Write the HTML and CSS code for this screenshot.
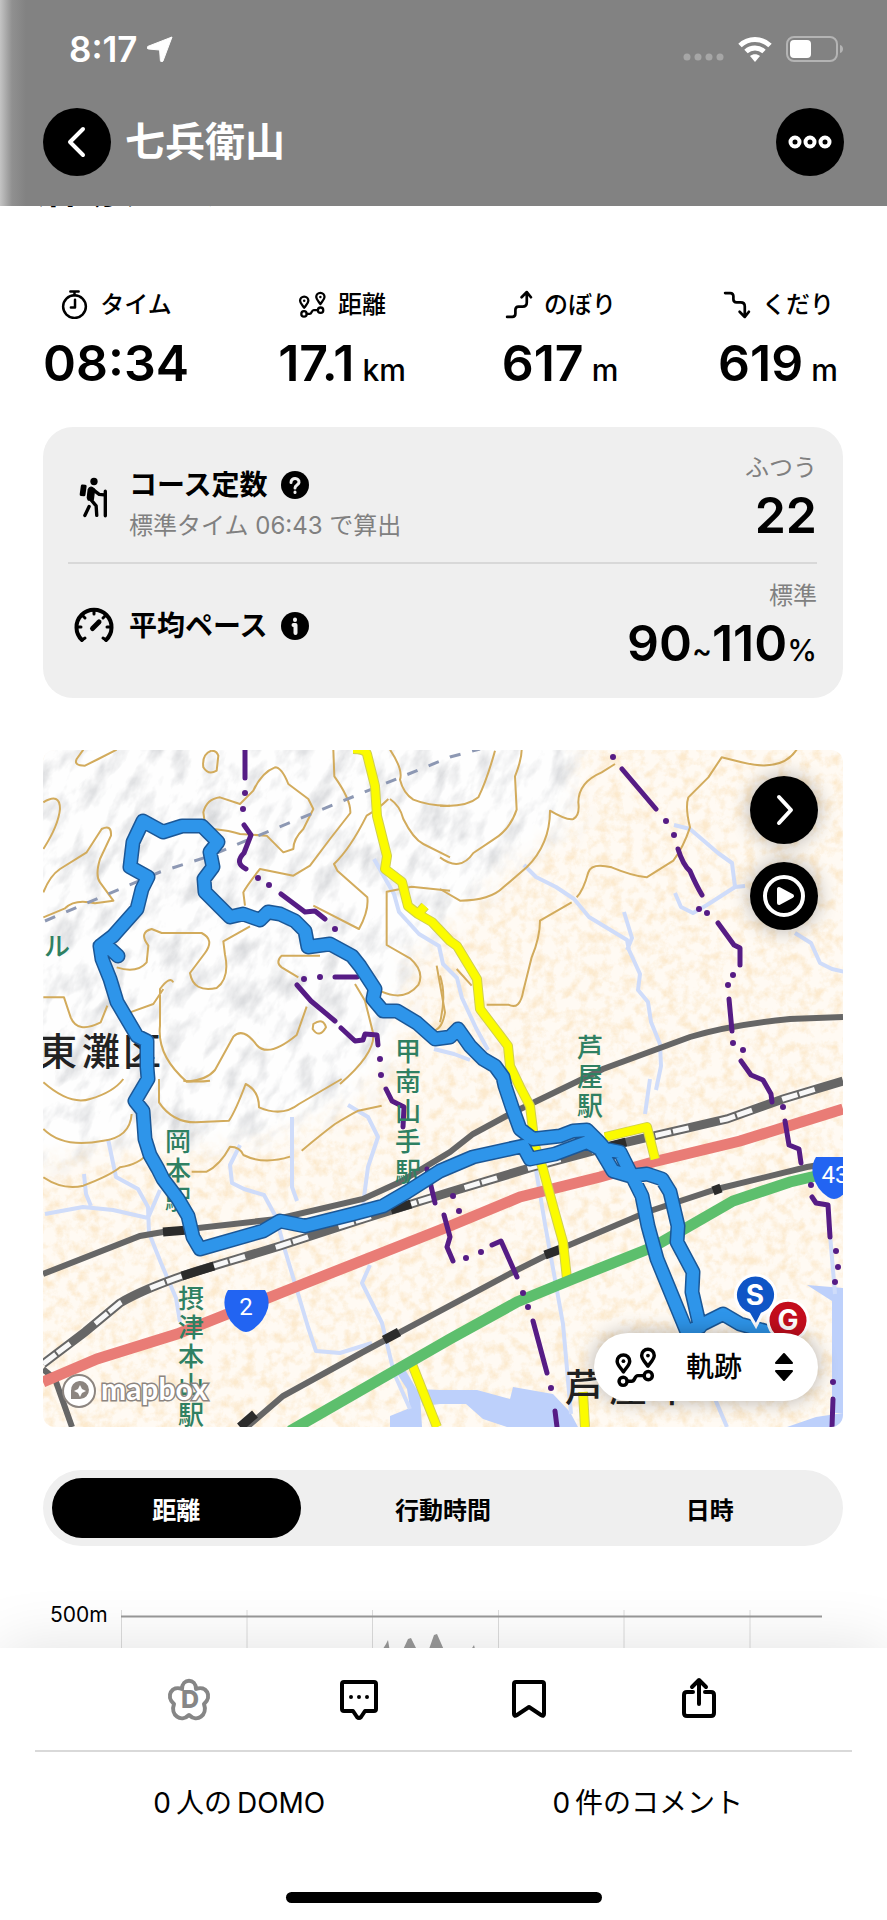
FILE: index.html
```
<!DOCTYPE html>
<html lang="ja">

<head>
  <meta charset="UTF-8">
  <meta name="viewport" content="width=device-width, initial-scale=1.0">
  <title>七兵衛山</title>
  <link rel="stylesheet" href="styles.css">
</head>

<body>
  <!-- shared icons -->
  <svg class="sprite" aria-hidden="true">
    <symbol id="icon-route" viewBox="520 795 140 135">
      <g fill="none" stroke="currentColor" stroke-width="11" stroke-linecap="round" stroke-linejoin="round">
        <path d="M550 878C540 864 530 855 530 844a20 20 0 0 1 40 0C570 855 560 864 550 878Z" />
        <path d="M628 860C618 846 608 837 608 826a20 20 0 0 1 40 0C648 837 638 846 628 860Z" />
        <circle cx="549" cy="908" r="13" />
        <circle cx="629" cy="890" r="13" />
        <path d="M562 908h14c12 0 8-18 20-18h20" />
      </g>
      <circle cx="550" cy="844" r="6" fill="currentColor" />
      <circle cx="628" cy="826" r="6" fill="currentColor" />
    </symbol>
  </svg>

  <div class="app">
    <header class="header">
      <div class="status">
        <span class="clock">8:17</span>
        <svg class="arrow" viewBox="0 0 26 26"><path d="M25 1 16 25c-.6 1.4-2.4 1.2-2.6-.4L12.600 14 1.500 13c-1.700-.2-1.900-2-.4-2.700Z" fill="#fff" stroke="#fff" stroke-linejoin="round" /></svg>
        <svg class="signal" viewBox="0 0 41 8" fill="#a6a6a6"><circle cx="4" cy="4" r="3.500" /><circle cx="15" cy="4" r="3.500" /><circle cx="26" cy="4" r="3.500" /><circle cx="37" cy="4" r="3.500" /></svg>
        <svg class="wifi" viewBox="0 0 34 26">
          <path d="M2 9.500C10.500 1.500 23.500 1.500 32 9.500M8 15.500c5-4.600 13-4.600 18 0" fill="none" stroke="#fff" stroke-width="5" />
          <path d="M17 26l-5-6c3-2.400 7-2.400 10 0Z" fill="#fff" />
        </svg>
        <svg class="battery" viewBox="0 0 58 26">
          <rect x="1" y="1" width="50" height="24" rx="7" fill="none" stroke="#b4b4b4" stroke-width="2" />
          <rect x="4" y="4" width="21" height="18" rx="4" fill="#fff" />
          <path d="M54 9c4 1 4 7 0 8Z" fill="#b4b4b4" />
        </svg>
      </div>
      <div class="titlebar">
        <button class="round" aria-label="戻る">
          <svg viewBox="0 0 68 68"><path d="M40 21 27 34l13 13" /></svg>
        </button>
        <h1>七兵衛山</h1>
        <button class="round" aria-label="メニュー">
          <svg viewBox="0 0 68 68"><circle cx="19" cy="34" r="4.500" /><circle cx="34" cy="34" r="4.500" /><circle cx="49" cy="34" r="4.500" /></svg>
        </button>
      </div>
    </header>

    <main class="content">
      <h2 class="section-title">活動データ</h2>

      <dl class="stats">
        <div class="stat">
          <dt>
            <svg viewBox="0 0 28 28" fill="none" stroke="#000" stroke-width="2.400" stroke-linecap="round" stroke-linejoin="round"><circle cx="14" cy="16" r="11" /><path d="M14 5V1.500M10 1.500h8M14.500 9.500V17H10.500" /></svg>
            タイム
          </dt>
          <dd>08:34</dd>
        </div>
        <div class="stat">
          <dt><svg viewBox="0 0 28 28"><use href="#icon-route" /></svg>距離</dt>
          <dd>17.1<small>km</small></dd>
        </div>
        <div class="stat">
          <dt>
            <svg viewBox="0 0 28 28" fill="none" stroke="#000" stroke-width="2.600" stroke-linecap="round" stroke-linejoin="round"><path d="M3 26h5q3 0 3-3v-4q0-3 3-3h4q4 0 4-4V3M17 7l5-5 4 5" /></svg>
            のぼり
          </dt>
          <dd>617<small>m</small></dd>
        </div>
        <div class="stat">
          <dt>
            <svg viewBox="0 0 28 28" fill="none" stroke="#000" stroke-width="2.600" stroke-linecap="round" stroke-linejoin="round"><path d="M3 3h5q3 0 3 3v3q0 3 3 3h4q4 0 4 4v9M17 21l5 5 4-5" /></svg>
            くだり
          </dt>
          <dd>619<small>m</small></dd>
        </div>
      </dl>

      <section class="card">
        <div class="row">
          <svg class="row-icon" viewBox="55 48 104 144">
            <circle cx="107" cy="66" r="12" />
            <rect x="62" y="76" width="19" height="38" rx="5" transform="rotate(8 71 95)" />
            <path d="M88 92q6-12 16-5l5 4-4 34-17 2-3-8Z" stroke="#000" stroke-width="4" stroke-linejoin="round" />
            <path d="M106 94 124 108 140 110M144 98V178M94 122 114 146 116 177M91 148 77 177" fill="none" stroke="#000" stroke-width="11" stroke-linecap="round" stroke-linejoin="round" />
          </svg>
          <div class="row-text">
            <h3>コース定数
              <button class="hint" aria-label="コース定数とは"><svg viewBox="0 0 28 28"><circle cx="14" cy="14" r="14" /><path d="M10 11.500c0-5.500 8.500-5 8 0-.3 2.600-4 2.500-4 5.500M14 21v.4" fill="none" stroke="#efefef" stroke-width="3" stroke-linecap="round" /></svg></button>
            </h3>
            <p>標準タイム 06:43 で算出</p>
          </div>
          <div class="row-value">
            <span>ふつう</span>
            <strong>22</strong>
          </div>
        </div>
        <div class="row">
          <svg class="row-icon" viewBox="0 0 40 40" fill="none" stroke="#000" stroke-width="4" stroke-linecap="round">
            <path d="M8 34A17.500 17.500 0 1 1 32 34" />
            <path d="M3 21h4M33 21h4M20 5v3M9 10l2 2M31 10l-2 2M8 34l3-2M32 34l-3-2" stroke-width="3" />
            <path d="M18.500 22.500 25 16" stroke-width="5" />
          </svg>
          <h3>平均ペース
            <button class="hint" aria-label="平均ペースとは"><svg viewBox="0 0 28 28"><circle cx="14" cy="14" r="14" /><path d="M14 7.500v.4M12.500 13H14.500V21" fill="none" stroke="#efefef" stroke-width="4" stroke-linecap="round" stroke-linejoin="round" /></svg></button>
          </h3>
          <div class="row-value">
            <span>標準</span>
            <strong>90<small>~</small>110<small>%</small></strong>
          </div>
        </div>
      </section>

      <section class="map">
        <svg class="map-canvas" viewBox="43 751 800 677" role="img" aria-label="軌跡の地図">
          <defs>
            <filter id="speckle" x="0" y="0" width="100%" height="100%">
              <feTurbulence type="fractalNoise" baseFrequency="0.09" numOctaves="5" seed="4" />
              <feColorMatrix values="0 0 0 0 .97  0 0 0 0 .82  0 0 0 0 .62  2.600 0 0 0 -1.080" />
            </filter>
            <filter id="relief" x="0" y="0" width="100%" height="100%">
              <feTurbulence type="fractalNoise" baseFrequency="0.028 0.06" numOctaves="5" seed="9" />
              <feColorMatrix values="0 0 0 0 .66  0 0 0 0 .67  0 0 0 0 .69  2.200 0 0 0 -1" />
            </filter>
            <filter id="soft"><feGaussianBlur stdDeviation="12" /></filter>
            <mask id="hills"><path d="M0 700H585L575 830 520 860 460 920 410 960 400 1050 350 1110 250 1150 130 1150 0 1170Z" fill="#fff" filter="url(#soft)" /></mask>
          </defs>

          <rect x="43" y="751" width="800" height="677" fill="#fffaf3" />
          <rect x="43" y="751" width="800" height="677" filter="url(#speckle)" />
          <g mask="url(#hills)">
            <rect x="43" y="751" width="600" height="500" fill="#fefefe" />
            <rect x="-400" y="500" width="1400" height="1100" filter="url(#relief)" transform="rotate(-60 300 950)" />
          </g>

          <!-- water -->
          <g fill="#bdd0fb">
            <path d="M440 1391h37l33 9 3-12 40 7 17 18 8 15h-71l-24-8-17-15H440l-17 2-7-17Z" />
            <path d="M390 1417l20-8-3-19-13-20 12 2 14 24 2 32h-32ZM807 1286l36 3v125l-27 4-29 10h56v-14l-11 0V1302Z" />
          </g>

          <!-- streams -->
          <g class="stream">
            <path d="M374 860l20 35 5 18 20 22 20 12 4 18 14 14 5 20 14 30 12 22" />
            <path d="M524 866l12 12 20 10 18 12 15 18 38 23 2 10 11 24-2 16 10 12 3 20 9 22 1 22-5 24M624 913l8 26-5 12M674 826l16 4 14 12 14 12 14 10 3 24 10-1M735 888l-28 18-14 8-12-6-6-14M795 934l16 10 9 20 12 6 13 3" />
            <path d="M45 1215l38-7 30 3 35 8 12-28M84 1175l2 20 5 12M108 1140l8 38 22 12 10 18 1 26 12 30 15 35 4 24M240 1146l-10 20 2 18 12 6 20 6 12 22 8 30 12 40 12 40 8 24 24 2 32-10M292 1118v70l5 14M348 1106l20 12 10 20-10 30-4 30-2 26M370 1266l-8 18 20 40 12 50 16 36" />
            <path d="M434 1050l20 5 16 6M535 1165l10 60 18 100 8 90M650 1080l-5 35M830 1235l5 60M715 1400l12 28" />
          </g>

          <!-- contour lines, one group per tile -->
          <g class="contour" transform="translate(30 740) scale(.33333)">
            <path d="M260 32 205 60 165 80Q130 80 140 60L160 32M545 35Q515 45 520 85q15 25 40 10l5-45Q560 35 545 35M40 190q50-30 50 20Q85 260 40 330M40 460Q60 410 90 390L170 340 215 270q30-15 28 20L210 360q-15 50 0 70l40 55-55 8q-60-15-90 15L40 535" />
            <path d="M550 270q50 5 80 15l80 5 50 50 30-10q0-30 30-60l30-60-15-30-60-45q-20-50-40-50-40 15-65 70l-40 40-60-20q-40 5-50 45l5 35" />
            <path d="M910 32l3 80q50 70 48 110L900 300l-60 80-50 30-100-20q-40 50-50 70l5 40M1080 32q40 60 30 90 10 40 40 60 50 20 110 18M1075 180q-30 30-65 50-50 100-98 145l10 20 90 80q5 40-25 95L850 500M1080 180q30 20 40 60 30 60 60 75l80 40M1260 455l-115-12-75 15 0 160 70 40q45 40 25 80-40 50-110 20M1220 680l25 140q-10 60-45 55" />
            <path d="M40 775h62l20 60q20 50 90 15l20-50M300 820l70-25 30-45M260 685q60 20 90-15l5-50q-30-40 10-50l30 12h120q40 20 10 60l-45 60q10 60 80 45 40-30 25-100l-5-40 80-45M430 730q-10-20-40 20l0 110Q380 950 470 1028q60-5 85-35l55-100q30-30 70 25 35 40 120-30l30-85M870 650h-115q-20 20 0 35l50 30M975 735l30 50 25 100q5 60-100 150M850 855q30-20 38 10-20 35-40 5Z" />
          </g>
          <g class="contour" transform="translate(440 740) scale(.33333)">
            <path d="M0 200q80 5 115-25 25-50 50-140M245 32q0 30-20 80l5 100q-20 60-70 90l-60 40Q60 400 0 355M0 450l60 35q90 0 130-40l70-60q70-70 70-170 50 30 70 25 20-10 15-50 0-60 70-90l40-25M395 490l-95 55q0 50-25 110l-25 100q-10 60-45 42h-65M410 475q20-20 35-75 10-30 70-15 60 25 105 30l80-50q30-40 50-100-15-60-5-90l60-60 40-60 60 15q120 30 165-38M0 850q20-80 0-140M50 690l45 50" />
          </g>
          <g class="contour" transform="translate(30 1080) scale(.33333)">
            <path d="M40 10q80 70 140 50 70-20 100-60M387 0v70q40 60 110 60l100-5q20-30 50-110 40 20 40 70 70 30 120-10L935 0M460 5q40 5 80 0M40 150q60 60 180 35 80-10 85-80M40 295q60 40 120 25 80-30 110-55 60-10 80-40M485 278h45q40-20 70-75 30 0 40 25 60 30 140 5M815 215q60-50 100-80 50-30 70-40l70-15" />
          </g>

          <path d="M45 922 160 873 210 857 250 840 450 758 480 750" class="tunnel" />

          <!-- railways and roads -->
          <path class="rail" d="M43 1275 140 1237 163 1233 277 1220 363 1200 400 1183 450 1153 473 1135 510 1115 603 1070 690 1038Q730 1026 790 1020L843 1018M43 1370 55 1380 72 1428M247 1428 283 1397 363 1353 513 1273 553 1253 647 1213 717 1190 807 1168 843 1162" />
          <path class="rail dark" d="M163 1233l25-2M240 1428l15-13M384 1341l15-8M545 1256l16-6M713 1192l8-3" />
          <path class="jr" d="M43 1365 85 1333 120 1304Q145 1289 197 1272L280 1247 363 1220 450 1193 533 1168 627 1143 727 1120 783 1100 843 1082" />
          <path class="jr-gap" d="M43 1365 85 1333 120 1304Q145 1289 197 1272L280 1247 363 1220 450 1193 533 1168 627 1143 727 1120 783 1100 843 1082" />
          <path class="rail dark" d="M182 1277l32-10M391 1211l20-6M610 1147l16-4" />
          <path class="road red" d="M43 1383 97 1360 177 1335 283 1293 450 1227 520 1198 600 1178 653 1163 740 1142 843 1110" />
          <g class="yellow">
            <path d="M353 750q12 0 14 5l8 32 2 30 5 20 5 20-2 13 17 13 6 24 10 8 14 8 18 19 7 5 20 33 3 30 28 37 2 20 10 21 10 19 5 40 8 23 10 37 10 36 4 37M583 1393l2 35M605 1138l42-10 8 32M412 1365l25 63M418 915l7-8" class="casing" />
            <path d="M353 750q12 0 14 5l8 32 2 30 5 20 5 20-2 13 17 13 6 24 10 8 14 8 18 19 7 5 20 33 3 30 28 37 2 20 10 21 10 19 5 40 8 23 10 37 10 36 4 37M583 1393l2 35M605 1138l42-10 8 32M412 1365l25 63M418 915l7-8" />
          </g>
          <path class="road green" d="M290 1432 363 1390 450 1340 517 1303 573 1280 653 1248 733 1202 790 1183 820 1176" />

          <!-- ward and city borders -->
          <g class="border">
            <path d="M245 751v28M244 826l7 10-7 18q-10 10 2 16M281 895l24 18 10-1 10 8M335 978h22M297 986l14 16 24 20M341 1029l14 13 8-1 2-6 12 1 1 10M386 1090l6 12 12 6-1 20M427 1170l8 34M444 1216l6 22-3 10 6 14M492 1246l9-4 16 36M533 1322l14 52M555 1412l2 16" />
            <path d="M622 770l34 40M678 850q5 16 12 22 6 14 12 24M718 924l16 22 6 3v17M729 1000l3 32M741 1062l10 14 12 5 8 14 1 8M785 1122l4 24 10 4 2 14M812 1198l4 6 12 2 2 32M833 1400l-1 28" />
            <path class="dots" d="M245 794v0M243 810v0M258 879v0M269 886v0M335 930v0M304 980v0M320 978v0M380 1060v0M381 1076v0M453 1197v0M459 1212v0M466 1259v0M481 1253v0M523 1294v0M528 1308v0M551 1389v0M613 758v0M666 822v0M674 836v0M699 910v0M707 914v0M733 976v0M728 986v0M733 1044v0M743 1051v0M783 1108v0M811 1186v0M836 1252v0M838 1268v0M835 1283v0M833 1383v0" />
          </g>

          <!-- place names -->
          <g class="station">
            <text x="408 408 408 408 408" y="1062 1092 1122 1152 1182">甲南山手駅</text>
            <text x="178 178 178" y="1152 1181 1210">岡本駅</text>
            <text x="191 191 191 191 191" y="1309 1338 1367 1396 1425">摂津本山駅</text>
            <text x="590 590 590" y="1058 1087 1116">芦屋駅</text>
            <text x="57" y="957">ル</text>
          </g>
          <g class="place">
            <text x="58 101 142" y="1066">東灘区</text>
            <text x="584 628 672" y="1402">芦屋市</text>
          </g>

          <g class="shield">
            <path id="shield" d="M228 1291h37q5 8 3 18-4 14-16 22-6 4-12 0-12-8-15-22-2-10 3-18Z" />
            <use href="#shield" x="588" y="-133" />
            <text x="246" y="1316">2</text>
            <text x="835" y="1184">43</text>
          </g>

          <!-- recorded track -->
          <g class="track">
            <path id="track" d="M687 1333 657 1260 648 1227 642 1197 630 1173 620 1153 605 1150 598 1142 587 1131 573 1132 560 1137 533 1140 520 1130 512 1108 505 1087 503 1078 495 1067 483 1060 470 1047 458 1030 450 1038 435 1040 417 1024 397 1012 383 1012 373 1000 375 990 360 967 352 957 330 945 308 948 305 932 295 922 280 915 268 913 260 921 243 915 230 918 205 893 204 880 213 868 210 853 218 843 202 827 182 827 163 833 143 822 133 843 130 868 148 878 142 890 137 910 113 937 100 947 102 960 110 980 117 1003 137 1037 147 1042 147 1068 148 1080 135 1102 143 1112 145 1140 150 1156 158 1170 163 1180 178 1200 188 1217 193 1238 200 1250 263 1232 280 1222 305 1227 353 1215 383 1207 407 1193 440 1172 473 1158 523 1147 530 1160 555 1155 587 1143 600 1150 613 1172 630 1177 647 1175 662 1180 670 1193 678 1227 677 1243 693 1273 692 1293 700 1328 687 1333 707 1323 723 1315 740 1325 765 1332M105 945 118 957" />
            <use href="#track" class="track-fill" />
          </g>

          <g class="pin">
            <path d="M788 1352l-7-12a20 20 0 1 1 14 0Z" fill="#c30d1d" />
            <text x="788" y="1331">G</text>
            <path d="M756 1327l-7-12a20 20 0 1 1 13 0Z" fill="#0f55c6" />
            <text x="755" y="1306">S</text>
          </g>

          <g class="mapbox">
            <circle cx="79" cy="1392" r="16" fill="#fff" stroke="#8c8580" />
            <path d="M71 1400v-8a9 9 0 1 1 9 8Z" fill="#8c8580" stroke="none" />
            <path d="M80 1386l2 4 4 2-4 2-2 4-2-4-4-2 4-2Z" fill="#fff" stroke="none" />
            <text x="101" y="1401">mapbox</text>
          </g>
        </svg>

        <div class="map-buttons">
          <button class="round" aria-label="地図を開く"><svg viewBox="0 0 68 68"><path d="M29 21 41 34 29 47" /></svg></button>
          <button class="round" aria-label="再生"><svg viewBox="0 0 68 68"><circle cx="34" cy="34" r="19" /><path d="M29 27v14l13-7Z" fill="#fff" /></svg></button>
        </div>

        <label class="map-mode">
          <svg class="mode-icon" viewBox="0 0 44 44"><use href="#icon-route" /></svg>
          <select aria-label="地図の表示">
            <option>軌跡</option>
          </select>
          <svg class="mode-arrows" viewBox="0 0 20 30"><path d="M2 11 10 2l8 9ZM2 19l8 9 8-9Z" stroke="#000" stroke-width="2" stroke-linejoin="round" /></svg>
        </label>
      </section>

      <div class="tabs" role="tablist">
        <button class="active" role="tab" aria-selected="true">距離</button>
        <button role="tab" aria-selected="false">行動時間</button>
        <button role="tab" aria-selected="false">日時</button>
      </div>

      <div class="chart">
        <span>500m</span>
        <svg viewBox="0 0 701 200">
          <path d="M.5 10V200M126 10V200M251.500 10V200M377.500 10V200M503 10V200M629 10V200" stroke="#dcdcdc" />
          <path d="M0 16.500H701" stroke="#999" stroke-width="2" />
          <path d="M260 52l5-8 2-4 2 12h12l6-13 3-1 7 14h10l6-17 3-1 7 16 5 3 20 0 5-8 3 12Z" fill="#999" />
        </svg>
      </div>
    </main>

    <footer class="footer">
      <div class="actions">
        <button aria-label="DOMO">
          <svg viewBox="0 0 44 44" class="domo">
            <path d="M15 12C15 1 29 1 29 12 39 8 46 19 37 27 41 38 30 46 22 38 14 46 3 38 7 27-2 19 5 8 15 12Z" />
            <text x="23" y="31">D</text>
          </svg>
        </button>
        <button aria-label="コメント">
          <svg viewBox="0 0 44 44"><path d="M7 5h30q2 0 2 2v25q0 2-2 2H28l-4 6q-2 2-4 0l-4-6H7q-2 0-2-2V7q0-2 2-2Z" /><path d="M14 20v0M22 20v0M30 20v0" /></svg>
        </button>
        <button aria-label="ブックマーク">
          <svg viewBox="0 0 44 44"><path d="M9 5h26q2 0 2 2v30q0 3-3 1L22 30 10 38q-3 2-3-1V7q0-2 2-2Z" /></svg>
        </button>
        <button aria-label="共有">
          <svg viewBox="0 0 44 44"><path d="M16 15H10q-3 0-3 3V36q0 3 3 3H34q3 0 3-3V18q0-3-3-3H28M22 27V4M15 10l7-7 7 7" /></svg>
        </button>
      </div>
      <div class="counts">
        <a href="#domo"><span>0</span><span>人の</span><span>DOMO</span></a>
        <a href="#comments"><span>0</span><span>件のコメント</span></a>
      </div>
      <div class="home-bar"></div>
    </footer>
  </div>
</body>

</html>
```
FILE: styles.css
```
* {
  box-sizing: border-box;
}

body {
  margin: 0;
  background: #fff;
  color: #000;
  font-family: Inter, "Noto Sans CJK JP", sans-serif;
}

h1, h2, h3, p, dl, dd {
  margin: 0;
}

button {
  padding: 0;
  border: 0;
  background: none;
  font: inherit;
  color: inherit;
}

svg {
  display: block;
}

small {
  line-height: 1;
}

.sprite {
  width: 0;
  height: 0;
  position: absolute;
}

.app {
  display: flex;
  flex-direction: column;
  height: 100vh;
}

/* header */
.header {
  padding: 15px 43px 29px;
  background: linear-gradient(to right, #c4c4c4, #909090 12px, #828282 26px);
  color: #fff;
}

.status {
  display: flex;
  align-items: center;
  height: 68px;
  margin-bottom: 24px;
  padding-left: 26px;
}

.clock {
  font-size: 35px;
  font-weight: 600;
}

.arrow {
  width: 26px;
  height: 26px;
  margin-left: 9px;
}

.signal {
  width: 41px;
  height: 8px;
  margin: 16px 14px 0 auto;
}

.wifi {
  width: 34px;
  height: 26px;
  margin-right: 14px;
}

.battery {
  width: 58px;
  height: 26px;
}

.titlebar {
  display: flex;
  align-items: center;
  gap: 14px;
}

.titlebar h1 {
  flex: 1;
  font-size: 40px;
  line-height: 70px;
  font-weight: 700;
}

.round {
  width: 68px;
  height: 68px;
  border-radius: 50%;
  background: #000;
}

.round svg {
  fill: none;
  stroke: #fff;
  stroke-width: 4;
  stroke-linecap: round;
  stroke-linejoin: round;
}

/* content */
.content {
  flex: 1;
  min-height: 0;
  overflow: hidden;
  padding: 0 44px 0 43px;
}

.section-title {
  margin: -38px 0 82px -8px;
  font-size: 41px;
  line-height: 40px;
}

.stats {
  display: flex;
  justify-content: space-between;
}

.stat {
  min-width: 130px;
}

.stat dt {
  display: flex;
  align-items: center;
  justify-content: center;
  gap: 11px;
  margin-bottom: 19px;
  font-size: 24px;
  line-height: 28px;
  font-weight: 500;
}

.stat dt svg {
  width: 29px;
  height: 29px;
}

.stat dd {
  font-size: 50px;
  line-height: 50px;
  font-weight: 600;
  text-align: center;
}

.stat small {
  margin-left: 8px;
  font-size: 30px;
  font-weight: 500;
}

.card {
  margin-top: 39px;
  padding: 29px 26px 30px 25px;
  border-radius: 30px;
  background: #efefef;
}

.row {
  display: flex;
  align-items: center;
}

.row:first-child {
  padding-bottom: 22px;
  border-bottom: 2px solid #d8d8d8;
}

.row:last-child {
  padding-top: 20px;
}

.row-icon {
  width: 40px;
  height: 44px;
  margin: 0 15px 0 6px;
}

.row-text {
  align-self: flex-end;
}

.row h3 {
  display: flex;
  align-items: center;
  gap: 13px;
  font-size: 28px;
  line-height: 32px;
  font-weight: 700;
}

.hint svg {
  width: 28px;
  height: 28px;
}

.row p {
  margin-top: 11px;
  font-size: 24px;
  line-height: 28px;
  color: #808080;
}

.row-value {
  margin-left: auto;
  text-align: right;
}

.row-value span {
  display: block;
  margin-bottom: 10px;
  font-size: 24px;
  line-height: 24px;
  color: #808080;
}

.row-value strong {
  display: block;
  font-size: 50px;
  line-height: 50px;
  font-weight: 600;
}

.row-value small {
  font-size: 30px;
  font-weight: 500;
}

/* map */
.map {
  position: relative;
  margin-top: 52px;
  border-radius: 12px;
  overflow: hidden;
}

.map-canvas {
  width: 100%;
}

.stream {
  fill: none;
  stroke: #cfdcfa;
  stroke-width: 4;
  stroke-linejoin: round;
}

.contour {
  fill: none;
  stroke: #d2ab5c;
  stroke-width: 6;
  stroke-linejoin: round;
}

.tunnel {
  fill: none;
  stroke: #8d98b3;
  stroke-width: 3;
  stroke-dasharray: 11 12;
}

.rail {
  fill: none;
  stroke: #666;
  stroke-width: 6;
}

.rail.dark {
  stroke: #2b2b2b;
  stroke-width: 9;
}

.jr {
  fill: none;
  stroke: #666;
  stroke-width: 9;
}

.jr-gap {
  fill: none;
  stroke: #f8f8f8;
  stroke-width: 5;
  stroke-dasharray: 16 2 16 32;
}

.road {
  fill: none;
  stroke-width: 11;
}

.road.red {
  stroke: #e97c76;
}

.road.green {
  stroke: #5dbf6d;
}

.yellow path {
  fill: none;
  stroke: #fbfb00;
  stroke-width: 8;
  stroke-linejoin: round;
}

.yellow .casing {
  stroke: #cfcf50;
  stroke-width: 10;
}

.border path {
  fill: none;
  stroke: #561c85;
  stroke-width: 5;
  stroke-linecap: round;
  stroke-linejoin: round;
}

.border .dots {
  stroke-width: 6;
}

.station {
  font-size: 26px;
  font-weight: 500;
  fill: #2f8062;
  text-anchor: middle;
}

.place {
  font-size: 38px;
  font-weight: 500;
  fill: #222;
  text-anchor: middle;
}

.shield {
  fill: #2264f2;
}

.shield text {
  font-family: Roboto, sans-serif;
  font-size: 24px;
  fill: #fff;
  text-anchor: middle;
}

.track {
  fill: none;
  stroke: #1b5796;
  stroke-width: 15;
  stroke-linecap: round;
  stroke-linejoin: round;
}

.track-fill {
  stroke: #2e95ea;
  stroke-width: 12;
}

.pin path {
  stroke: #fff;
  stroke-width: 3;
}

.pin text {
  font-size: 28px;
  font-weight: 700;
  fill: #fff;
  text-anchor: middle;
}

.mapbox text {
  font-family: Lato, sans-serif;
  font-size: 30px;
  font-weight: 700;
  fill: #fff;
  stroke: #8c8580;
  stroke-width: 3;
  paint-order: stroke;
}

.mapbox circle {
  stroke-width: 2;
}

.map-buttons {
  position: absolute;
  top: 26px;
  right: 25px;
  display: grid;
  gap: 18px;
}

.map-buttons .round {
  box-shadow: 0 0 20px rgba(0, 0, 0, 0.3);
}

.map-mode {
  position: absolute;
  right: 25px;
  bottom: 26px;
  display: flex;
  align-items: center;
  width: 224px;
  height: 68px;
  padding: 0 24px 0 20px;
  border-radius: 34px;
  background: #fff;
  box-shadow: 0 0 20px rgba(0, 0, 0, 0.3);
}

.mode-icon {
  width: 44px;
  height: 44px;
}

.map-mode select {
  flex: 1;
  appearance: none;
  padding: 0 4px 0 0;
  border: 0;
  background: none;
  font: 500 28px/40px Inter, "Noto Sans CJK JP", sans-serif;
  color: #000;
  text-align: center;
}

.mode-arrows {
  width: 20px;
  height: 30px;
}

/* chart */
.tabs {
  display: grid;
  grid-template-columns: repeat(3, 1fr);
  margin-top: 43px;
  border-radius: 38px;
  background: #efefef;
}

.tabs button {
  height: 60px;
  margin: 8px 9px;
  border-radius: 30px;
  font-size: 24px;
  font-weight: 700;
}

.tabs .active {
  background: #000;
  color: #fff;
}

.chart {
  display: flex;
  align-items: flex-start;
  margin-top: 54px;
  padding: 0 21px 0 7px;
}

.chart span {
  width: 71px;
  font-size: 21px;
  line-height: 30px;
}

.chart svg {
  flex: 1;
}

/* footer */
.footer {
  position: relative;
  padding: 0 35px 17px;
  background: #fff;
  box-shadow: 0 0 60px rgba(0, 0, 0, 0.12);
}

.actions {
  display: grid;
  grid-template-columns: repeat(4, 170px);
  justify-content: center;
  height: 104px;
  border-bottom: 2px solid #d9d9d9;
}

.actions button {
  display: grid;
  place-items: center;
}

.actions svg {
  width: 44px;
  height: 44px;
  fill: none;
  stroke: #000;
  stroke-width: 4;
  stroke-linecap: round;
  stroke-linejoin: round;
}

.actions .domo {
  stroke: #868686;
}

.domo text {
  font-size: 25px;
  font-weight: 800;
  fill: #868686;
  stroke: none;
  text-anchor: middle;
}

.counts {
  display: grid;
  grid-template-columns: 1fr 1fr;
}

.counts a {
  display: flex;
  justify-content: center;
  gap: 5px;
  margin-bottom: 38px;
  font-size: 28px;
  line-height: 102px;
  color: #000;
  text-decoration: none;
}

.home-bar {
  width: 316px;
  height: 11px;
  margin: 0 auto;
  border-radius: 6px;
  background: #000;
}
```
